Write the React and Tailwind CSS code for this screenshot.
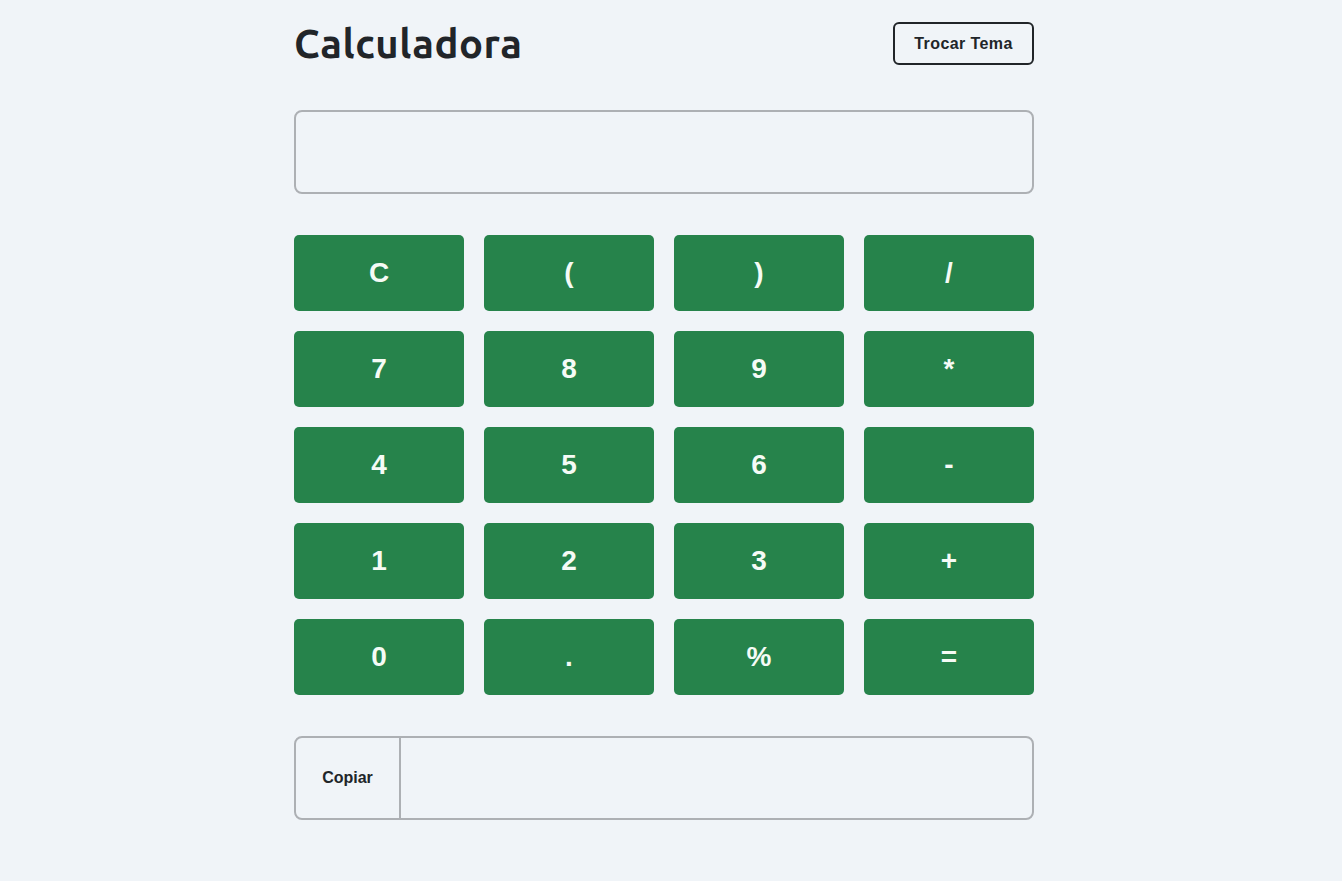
const keys = [
  "C", "(", ")", "/",
  "7", "8", "9", "*",
  "4", "5", "6", "-",
  "1", "2", "3", "+",
  "0", ".", "%", "=",
];

export default function App() {
  return (
    <div className="min-h-screen bg-[#f0f4f8] flex justify-center pr-[14px] text-[#212529]">
      <div className="w-[740px] pt-[22px] pb-10">
        <header className="flex items-center justify-between h-[43px]">
          <h1 className="text-[40px] font-bold tracking-[0.5px] font-['Ubuntu','Open_Sans',sans-serif] leading-none">
            Calculadora
          </h1>
          <button className="w-[141px] h-[43px] border-2 border-[#212529] rounded-md text-[16px] font-semibold tracking-[0.4px] font-['Liberation_Sans',Arial,sans-serif]">
            Trocar Tema
          </button>
        </header>

        <div className="mt-[45px] h-[84px] border-2 border-[#adb0b4] rounded-lg" />

        <div className="mt-[41px] grid grid-cols-4 gap-5">
          {keys.map((k) => (
            <button
              key={k}
              className="h-[76px] bg-[#26834b] rounded-[5px] text-[#f5fbf6] text-[28px] font-bold font-['Liberation_Sans',Arial,sans-serif]"
            >
              {k}
            </button>
          ))}
        </div>

        <div className="mt-[41px] h-[84px] border-2 border-[#adb0b4] rounded-lg flex">
          <button className="w-[105px] border-r-2 border-[#adb0b4] text-[16px] font-semibold font-['Liberation_Sans',Arial,sans-serif]">
            Copiar
          </button>
          <div className="flex-1" />
        </div>
      </div>
    </div>
  );
}
